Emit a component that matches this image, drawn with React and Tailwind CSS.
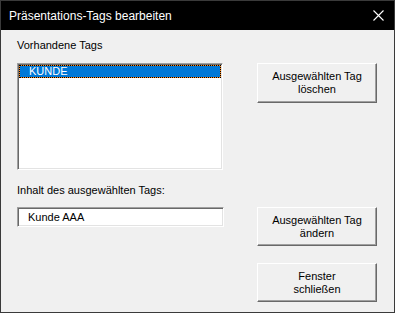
import React from "react";

const font = { fontFamily: '"Liberation Sans", Arial, sans-serif' };

const Button = ({ children, className = "" }) => (
  <button
    className={`w-[120px] flex items-center justify-center text-center text-[11px] leading-[13px] text-black bg-[#f0f0f0] border border-t-white border-l-white border-r-[#696969] border-b-[#696969] shadow-[inset_-1px_-1px_0_#a0a0a0] ${className}`}
  >
    {children}
  </button>
);

export default function App() {
  return (
    <div
      className="w-[395px] h-[313px] flex flex-col bg-[#f0f0f0] border border-[#3a3a3a] overflow-hidden"
      style={font}
    >
      {/* Titelleiste */}
      <div className="h-[29px] bg-black flex items-center justify-between shrink-0">
        <span className="pl-[8px] text-[12px] text-white">Präsentations-Tags bearbeiten</span>
        <svg width="11" height="11" viewBox="0 0 11 11" className="mr-[10px]">
          <path d="M0.5 0.5 L10.5 10.5 M10.5 0.5 L0.5 10.5" stroke="white" strokeWidth="1.1" />
        </svg>
      </div>

      {/* Inhalt */}
      <div className="flex pl-[16px]">
        <div className="flex flex-col w-[207px]">
          <div className="mt-[9px] text-[11px] leading-[13px] text-black">Vorhandene Tags</div>
          <div className="mt-[11px] w-[206px] h-[107px] bg-white border border-t-[#a0a0a0] border-l-[#a0a0a0] border-r-white border-b-white shadow-[inset_1px_1px_0_#696969,inset_-1px_-1px_0_#e3e3e3] pt-[1px] pl-[1px] pr-[1px]">
            <div className="bg-[#ff8a1c]">
              <div className="h-[13px] bg-[#0078d7] bg-clip-padding border border-dotted border-black flex items-center pl-[9px] text-[11px] leading-[11px] text-white">
                KUNDE
              </div>
            </div>
          </div>
          <div className="mt-[14px] text-[11px] leading-[13px] text-black">Inhalt des ausgewählten Tags:</div>
          <div className="mt-[10px] w-[207px] h-[20px] bg-white border border-t-[#a0a0a0] border-l-[#a0a0a0] border-r-white border-b-white shadow-[inset_1px_1px_0_#696969,inset_-1px_-1px_0_#e3e3e3] flex items-center pl-[10px] text-[11px] text-black">
            Kunde AAA
          </div>
        </div>

        <div className="flex flex-col ml-[33px]">
          <Button className="mt-[33px] h-[40px]">
            Ausgewählten Tag
            <br />
            löschen
          </Button>
          <Button className="mt-[104px] h-[39px]">
            Ausgewählten Tag
            <br />
            ändern
          </Button>
          <Button className="mt-[17px] h-[39px]">
            Fenster
            <br />
            schließen
          </Button>
        </div>
      </div>
    </div>
  );
}
